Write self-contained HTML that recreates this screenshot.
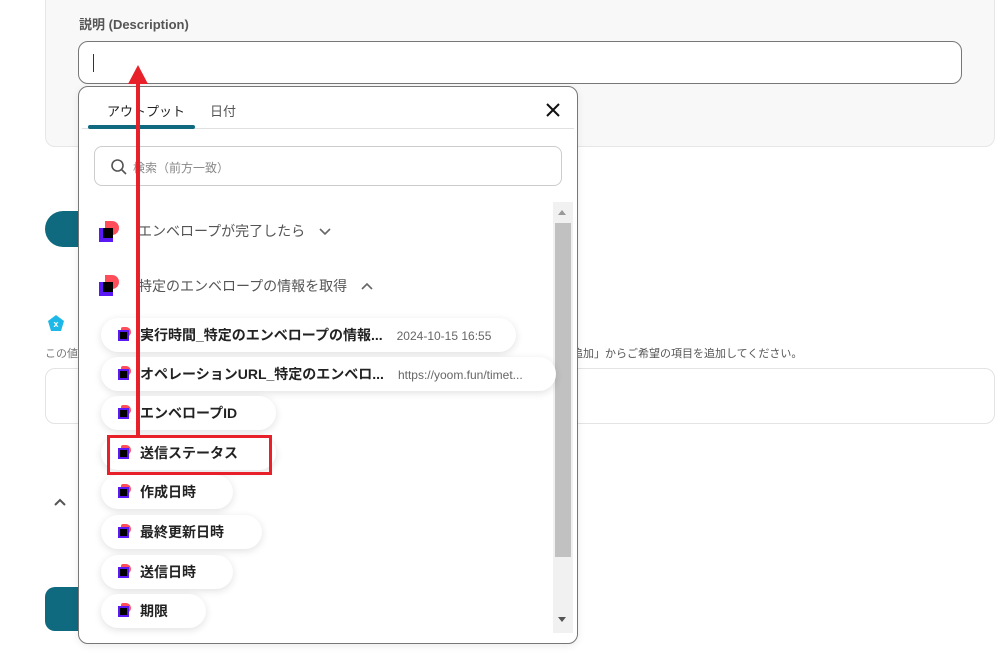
<!DOCTYPE html>
<html><head><meta charset="utf-8"><style>
*{box-sizing:border-box;margin:0;padding:0}
body{width:1005px;height:662px;background:#fff;position:relative;overflow:hidden;font-family:"Liberation Sans","Noto Sans CJK JP",sans-serif;color:#333}
.a{position:absolute}
.pill{position:absolute;left:101px;height:34px;background:#fff;border-radius:17px;box-shadow:0 2px 8px rgba(0,0,0,.12);font-size:14px;font-weight:bold;color:#222;line-height:34px;padding-left:39px;white-space:nowrap;overflow:hidden}
.pill .v{font-weight:normal;color:#666;font-size:12px;margin-left:14px}
.pill::before{content:"";position:absolute;left:17px;top:12px;width:11px;height:11px;background:linear-gradient(#000,#000) 2px 2px/7px 7px no-repeat,#5a18f5;z-index:1}
.pill::after{content:"";position:absolute;left:20px;top:9px;width:10px;height:10px;border-radius:2px 50% 50% 2px;background:#ff4d5a;z-index:0}
</style></head><body>
<div class="a" style="left:45px;top:-10px;width:950px;height:157px;background:#f8f8f9;border:1px solid #e6e6e6;border-radius:10px"></div>
<div class="a" style="left:79px;top:14px;font-size:13px;font-weight:bold;color:#555">説明 (Description)</div>
<div class="a" style="left:78px;top:41px;width:884px;height:43px;background:#fff;border:1px solid #777;border-radius:10px"></div>
<div class="a" style="left:93px;top:54px;width:1px;height:18px;background:#333"></div>

<div class="a" style="left:45px;top:211px;width:60px;height:36px;background:#0f6a80;border-radius:18px"></div>
<div class="a" style="left:45px;top:587px;width:60px;height:44px;background:#0f6a80;border-radius:10px"></div>
<svg class="a" style="left:47px;top:314px" width="18" height="18" viewBox="0 0 18 18"><path d="M9 1L17 7L14 17H4L1 7Z" fill="#1eb8e8"/><text x="9" y="13" font-size="9" fill="#fff" text-anchor="middle" font-family="Liberation Sans" font-weight="bold">x</text></svg>
<div class="a" style="left:45px;top:345px;font-size:11px;color:#777">この値</div>
<div class="a" style="left:572px;top:345px;font-size:11px;color:#555">追加」からご希望の項目を追加してください。</div>
<div class="a" style="left:45px;top:368px;width:950px;height:56px;border:1px solid #e3e3e3;border-radius:10px"></div>
<svg class="a" style="left:53px;top:497px" width="14" height="10"><path d="M2 8L7 3L12 8" stroke="#555" stroke-width="2" fill="none"/></svg>

<div class="a" style="left:78px;top:86px;width:500px;height:558px;background:#fff;border:1px solid #777;border-radius:10px;box-shadow:0 2px 8px rgba(0,0,0,.08)"></div>
<div class="a" style="left:107px;top:101px;font-size:13px;color:#222">アウトプット</div>
<div class="a" style="left:210px;top:101px;font-size:13px;color:#555">日付</div>
<div class="a" style="left:82px;top:128px;width:492px;height:1px;background:#e0e0e0"></div>
<div class="a" style="left:88px;top:125px;width:107px;height:4px;background:#0f6a80;border-radius:2px"></div>
<svg class="a" style="left:545px;top:102px" width="16" height="16"><path d="M2 2L14 14M14 2L2 14" stroke="#111" stroke-width="2"/></svg>
<div class="a" style="left:94px;top:146px;width:468px;height:40px;border:1px solid #ccc;border-radius:8px"></div>
<svg class="a" style="left:110px;top:158px" width="18" height="18"><circle cx="7.5" cy="7.5" r="5.5" stroke="#555" stroke-width="1.6" fill="none"/><path d="M11.5 11.5L16 16" stroke="#555" stroke-width="1.6"/></svg>
<div class="a" style="left:133px;top:159px;font-size:12px;color:#888">検索（前方一致）</div>

<div class="a" style="left:553px;top:202px;width:20px;height:431px;background:#f1f1f1"></div>
<div class="a" style="left:555px;top:223px;width:16px;height:334px;background:#c1c1c1"></div>
<svg class="a" style="left:557px;top:209px" width="10" height="8"><path d="M1 6L5 1L9 6Z" fill="#999"/></svg>
<svg class="a" style="left:557px;top:616px" width="10" height="8"><path d="M1 1L5 6L9 1Z" fill="#555"/></svg>

<svg class="a" style="left:98px;top:220px" width="22" height="22"><path d="M7 1H14A7 7 0 0 1 14 15H7Z" fill="#ff4d5a"/><rect x="1" y="8" width="14" height="14" fill="#5a18f5"/><rect x="5" y="8" width="10" height="10" fill="#000"/></svg>
<div class="a" style="left:138px;top:221px;font-size:14px;color:#555">エンベロープが完了したら</div>
<svg class="a" style="left:319px;top:228px" width="12" height="8"><path d="M1 1L6 6L11 1" stroke="#666" stroke-width="1.6" fill="none"/></svg>
<svg class="a" style="left:98px;top:274px" width="22" height="22"><path d="M7 1H14A7 7 0 0 1 14 15H7Z" fill="#ff4d5a"/><rect x="1" y="8" width="14" height="14" fill="#5a18f5"/><rect x="5" y="8" width="10" height="10" fill="#000"/></svg>
<div class="a" style="left:138px;top:276px;font-size:14px;color:#555">特定のエンベロープの情報を取得</div>
<svg class="a" style="left:361px;top:282px" width="12" height="8"><path d="M1 7L6 2L11 7" stroke="#666" stroke-width="1.6" fill="none"/></svg>

<div class="pill" style="top:318px;width:415px">実行時間_特定のエンベロープの情報...<span class="v">2024-10-15 16:55</span></div>
<div class="pill" style="top:357px;width:455px">オペレーションURL_特定のエンベロ...<span class="v">https://yoom.fun/timet...</span></div>
<div class="pill" style="top:396px;width:175px">エンベロープID</div>
<div class="pill" style="top:436px;width:175px">送信ステータス</div>
<div class="pill" style="top:475px;width:132px">作成日時</div>
<div class="pill" style="top:515px;width:161px">最終更新日時</div>
<div class="pill" style="top:555px;width:132px">送信日時</div>
<div class="pill" style="top:594px;width:105px">期限</div>

<div class="a" style="left:107px;top:435px;width:165px;height:40px;border:3px solid #e8202a"></div>
<div class="a" style="left:136px;top:82px;width:4px;height:354px;background:#e8202a"></div>
<svg class="a" style="left:127px;top:63px" width="22" height="22"><path d="M11 2L21 21H1Z" fill="#e8202a"/></svg>
</body></html>
